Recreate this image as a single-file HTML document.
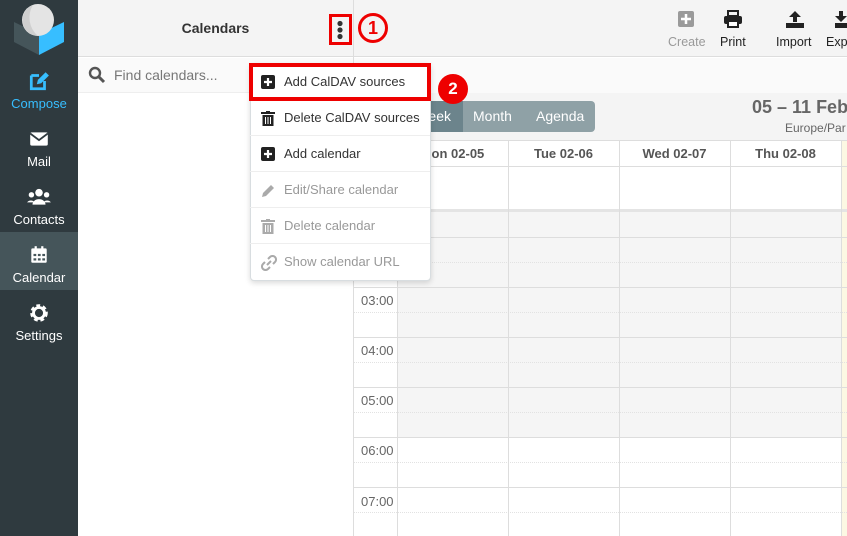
<!DOCTYPE html>
<html><head><meta charset="utf-8"><style>
*{margin:0;padding:0;box-sizing:border-box}
body{width:847px;height:536px;overflow:hidden;font-family:"Liberation Sans",sans-serif;background:#fff;position:relative}
.abs{position:absolute}
#side{left:0;top:0;width:78px;height:536px;background:#2f3a3f}
.nav{position:absolute;left:0;width:78px;height:58px;text-align:center;color:#fff;font-size:13px}
.nav svg{display:block;margin:10px auto 4px}
#lp{left:78px;top:0;width:276px;height:536px;background:#fff;border-right:1px solid #ddd}
.mi{position:absolute;left:250px;width:180px;height:36px;font-size:13px;color:#333;line-height:36px;padding-left:34px;border-bottom:1px solid #eee}
.mi svg{position:absolute;left:11px;top:11px}
.dis{color:#999}
.vl{position:absolute;width:1px;background:#ddd}
.hl{position:absolute;height:1px;background:#ddd}
.dl{position:absolute;height:0;border-top:1px dotted #e2e2e2}
.tm{position:absolute;left:361px;font-size:13px;color:#666}
.dh{position:absolute;top:141px;height:25px;line-height:25px;text-align:center;font-weight:bold;font-size:13px;color:#555;width:111px}
</style></head><body>
<div id="side" class="abs">
<svg class="abs" style="left:0;top:0" width="78" height="58"><polygon points="14,22 39,34 39,55 14,42" fill="#45555a"/><polygon points="39,34 64,22 64,42 39,55" fill="#37beff"/><circle cx="38" cy="20" r="16" fill="#e4e4e4"/><path d="M33,5 A16,16 0 0 0 38,36 A24,24 0 0 1 33,5z" fill="#cfcfcf"/></svg>
<div class="nav" style="top:60px;color:#37beff"><svg width="22" height="22" viewBox="0 0 20 20"><path d="M3 5h7M3 5v12h12v-7" stroke="#37beff" stroke-width="2.5" fill="none"/><path d="M8 13l1-4 7-7 3 3-7 7z" fill="#37beff"/></svg>Compose</div>
<div class="nav" style="top:118px"><svg width="22" height="22" viewBox="0 0 20 20"><rect x="2" y="4" width="16" height="12" rx="1.5" fill="#fff"/><path d="M2 5l8 6 8-6" stroke="#2f3a3f" stroke-width="1.6" fill="none"/></svg>Mail</div>
<div class="nav" style="top:176px"><svg width="26" height="22" viewBox="0 0 24 20"><circle cx="12" cy="6" r="3.5" fill="#fff"/><circle cx="5" cy="8" r="2.5" fill="#fff"/><circle cx="19" cy="8" r="2.5" fill="#fff"/><path d="M6 17a6 5 0 0 1 12 0z M1 15a4 3.5 0 0 1 7 0z M16 15a4 3.5 0 0 1 7 0z" fill="#fff"/></svg>Contacts</div>
<div class="nav" style="top:232px;background:#45555a;padding-top:2px"><svg width="22" height="22" viewBox="0 0 20 20"><rect x="3" y="4" width="14" height="13" rx="1" fill="#fff"/><rect x="6" y="2" width="2" height="4" fill="#fff"/><rect x="12" y="2" width="2" height="4" fill="#fff"/><g fill="#45555a"><rect x="5" y="9" width="2.5" height="2"/><rect x="9" y="9" width="2.5" height="2"/><rect x="13" y="9" width="2.5" height="2"/><rect x="5" y="13" width="2.5" height="2"/><rect x="9" y="13" width="2.5" height="2"/><rect x="13" y="13" width="2.5" height="2"/></g></svg>Calendar</div>
<div class="nav" style="top:292px"><svg width="22" height="22" viewBox="0 0 20 20"><circle cx="10" cy="10" r="6" fill="none" stroke="#fff" stroke-width="4" stroke-dasharray="3 2.2"/><circle cx="10" cy="10" r="5" fill="none" stroke="#fff" stroke-width="2.6"/></svg>Settings</div>
</div>
<div id="lp" class="abs">
<div class="abs" style="left:0;top:0;width:275px;height:57px;background:#f4f4f4;border-bottom:1px solid #ddd"></div>
<div class="abs" style="left:0;top:20px;width:275px;text-align:center;font-weight:bold;font-size:14px;color:#333">Calendars</div>
<div class="abs" style="left:0;top:58px;width:275px;height:35px;background:#fafafa;border-bottom:1px solid #eee"></div>
<svg class="abs" style="left:10px;top:66px" width="18" height="18" viewBox="0 0 18 18"><circle cx="7" cy="7" r="5" stroke="#555" stroke-width="2.4" fill="none"/><path d="M11 11l5 5" stroke="#555" stroke-width="3"/></svg>
<div class="abs" style="left:36px;top:67px;font-size:14px;color:#777">Find calendars...</div>
</div>
<div class="abs" style="left:354px;top:0;width:493px;height:57px;background:#f4f4f4;border-bottom:1px solid #ddd"></div>
<div class="abs" style="left:354px;top:58px;width:493px;height:35px;background:#fafafa"></div>
<div class="abs" style="left:354px;top:93px;width:493px;height:48px;background:#f4f4f4;border-bottom:1px solid #ddd"></div>
<svg class="abs" style="left:678px;top:11px" width="16" height="16"><rect width="16" height="16" rx="2" fill="#9a9a9a"/><path d="M8 3v10M3 8h10" stroke="#fff" stroke-width="2.5"/></svg>
<div class="abs" style="left:668px;top:35px;font-size:12.5px;color:#999">Create</div>
<svg class="abs" style="left:723px;top:10px" width="20" height="18" viewBox="0 0 20 18"><rect x="5" y="1" width="10" height="5" fill="none" stroke="#222" stroke-width="2"/><rect x="1" y="6" width="18" height="8" rx="2" fill="#222"/><rect x="5" y="11" width="10" height="6" fill="#fff" stroke="#222" stroke-width="2"/></svg>
<div class="abs" style="left:720px;top:35px;font-size:12.5px;color:#222">Print</div>
<svg class="abs" style="left:785px;top:10px" width="20" height="18" viewBox="0 0 20 18"><path d="M10 1l-6 6h4v5h4V7h4z" fill="#222"/><rect x="1" y="13" width="18" height="5" fill="#222"/></svg>
<div class="abs" style="left:776px;top:35px;font-size:12.5px;color:#222">Import</div>
<svg class="abs" style="left:835px;top:10px" width="12" height="18" viewBox="0 0 12 18"><path d="M6 12l-6-6h4V1h4v5h4z" fill="#222"/><rect x="0" y="13" width="12" height="5" fill="#222"/></svg>
<div class="abs" style="left:826px;top:35px;font-size:12.5px;color:#222">Exp</div>
<div class="abs" style="left:380px;top:101px;width:215px;height:31px;background:#8fa1a6;border-radius:4px"></div>
<div class="abs" style="left:380px;top:101px;width:83px;height:31px;background:#6c848c;border-radius:4px 0 0 4px;color:#fff;font-size:14px;line-height:31px;text-align:right;padding-right:12px">Week</div>
<div class="abs" style="left:473px;top:108px;font-size:14px;color:#fff">Month</div>
<div class="abs" style="left:536px;top:108px;font-size:14px;color:#fff">Agenda</div>
<div class="abs" style="left:752px;top:97px;font-size:18px;font-weight:bold;color:#666;white-space:nowrap">05 – 11 Feb</div>
<div class="abs" style="left:785px;top:121px;font-size:12px;color:#666;white-space:nowrap">Europe/Par</div>
<div class="abs" style="left:397px;top:212px;width:444px;height:225px;background:#f5f5f5"></div>
<div class="abs" style="left:841px;top:141px;width:6px;height:395px;background:#fcf8e3"></div>
<div class="hl" style="left:354px;top:166px;width:493px"></div>
<div class="hl" style="left:354px;top:209px;width:493px;height:3px;background:#e4e4e4"></div>
<div class="hl" style="left:354px;top:237px;width:493px"></div>
<div class="hl" style="left:354px;top:287px;width:493px"></div>
<div class="hl" style="left:354px;top:337px;width:493px"></div>
<div class="hl" style="left:354px;top:387px;width:493px"></div>
<div class="hl" style="left:354px;top:437px;width:493px"></div>
<div class="hl" style="left:354px;top:487px;width:493px"></div>
<div class="dl" style="left:354px;top:262px;width:493px"></div>
<div class="dl" style="left:354px;top:312px;width:493px"></div>
<div class="dl" style="left:354px;top:362px;width:493px"></div>
<div class="dl" style="left:354px;top:412px;width:493px"></div>
<div class="dl" style="left:354px;top:462px;width:493px"></div>
<div class="dl" style="left:354px;top:512px;width:493px"></div>
<div class="vl" style="left:397px;top:141px;height:395px"></div>
<div class="vl" style="left:508px;top:141px;height:395px"></div>
<div class="vl" style="left:619px;top:141px;height:395px"></div>
<div class="vl" style="left:730px;top:141px;height:395px"></div>
<div class="vl" style="left:841px;top:141px;height:395px"></div>
<div class="dh" style="left:397px">Mon 02-05</div>
<div class="dh" style="left:508px">Tue 02-06</div>
<div class="dh" style="left:619px">Wed 02-07</div>
<div class="dh" style="left:730px">Thu 02-08</div>
<div class="tm" style="top:293px">03:00</div>
<div class="tm" style="top:343px">04:00</div>
<div class="tm" style="top:393px">05:00</div>
<div class="tm" style="top:443px">06:00</div>
<div class="tm" style="top:494px">07:00</div>
<div class="abs" style="left:329px;top:14px;width:23px;height:31px;border:3px solid #e00"></div>
<svg class="abs" style="left:336px;top:20px" width="8" height="20"><circle cx="4" cy="3.5" r="2.6" fill="#333"/><circle cx="4" cy="10" r="2.6" fill="#333"/><circle cx="4" cy="16.5" r="2.6" fill="#333"/></svg>
<div class="abs" style="left:358px;top:13px;width:30px;height:30px;border-radius:50%;border:3px solid #e00;color:#e00;font-weight:bold;font-size:18px;text-align:center;line-height:24px">1</div>
<div class="abs" style="left:250px;top:63px;width:181px;height:218px;background:#fff;border:1px solid #d8dde0;border-radius:4px;box-shadow:0 2px 6px rgba(0,0,0,.15)"></div>
<div class="mi" style="top:64px">Add CalDAV sources<svg width="14" height="14"><rect width="14" height="14" rx="2" fill="#222"/><path d="M7 3v8M3 7h8" stroke="#fff" stroke-width="2.2"/></svg></div>
<div class="mi" style="top:100px">Delete CalDAV sources<svg width="14" height="15"><rect x="0" y="1" width="14" height="2" fill="#222"/><rect x="5" y="0" width="4" height="2" fill="#222"/><rect x="1.5" y="4" width="11" height="11" fill="#222"/><path d="M4.5 6v7M7 6v7M9.5 6v7" stroke="#fff" stroke-width="1"/></svg></div>
<div class="mi" style="top:136px">Add calendar<svg width="14" height="14"><rect width="14" height="14" rx="2" fill="#222"/><path d="M7 3v8M3 7h8" stroke="#fff" stroke-width="2.2"/></svg></div>
<div class="mi dis" style="top:172px">Edit/Share calendar<svg width="15" height="15"><path d="M1 14l1-4 8-8 3 3-8 8z" fill="#aaa"/></svg></div>
<div class="mi dis" style="top:208px">Delete calendar<svg width="14" height="15"><rect x="0" y="1" width="14" height="2" fill="#aaa"/><rect x="5" y="0" width="4" height="2" fill="#aaa"/><rect x="1.5" y="4" width="11" height="11" fill="#aaa"/><path d="M4.5 6v7M7 6v7M9.5 6v7" stroke="#fff" stroke-width="1"/></svg></div>
<div class="mi dis" style="top:244px;border-bottom:none">Show calendar URL<svg width="16" height="16"><path d="M7 4l2-2a3 3 0 0 1 5 5l-2 2M9 12l-2 2a3 3 0 0 1-5-5l2-2M6 10l4-4" stroke="#aaa" stroke-width="2" fill="none"/></svg></div>
<div class="abs" style="left:249px;top:63px;width:182px;height:38px;border:4px solid #e00"></div>
<div class="abs" style="left:438px;top:74px;width:30px;height:30px;border-radius:50%;border:3px solid #e00;background:#e00;color:#fff;font-weight:bold;font-size:17px;text-align:center;line-height:24px">2</div>
</body></html>
